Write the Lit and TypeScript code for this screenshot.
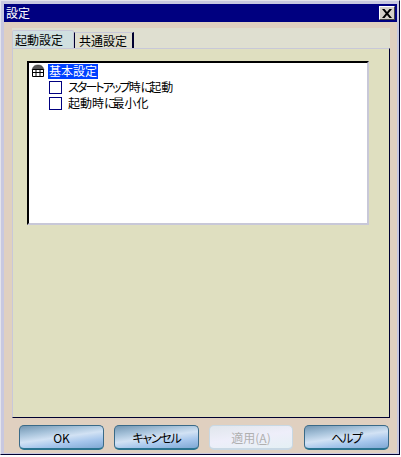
import { LitElement, html, css } from "lit";
import { customElement } from "lit/decorators.js";

@customElement("app-root")
export class AppRoot extends LitElement {
  static styles = css`
    :host { display: block; width: 401px; height: 457px; background: #fff; font-family: "Noto Sans CJK JP", "Liberation Sans", sans-serif; font-size: 12px; color: #000; font-feature-settings: "palt"; }
    * { box-sizing: border-box; }
    .win { width: 400px; height: 455px; background: #c8c8e0; border: 1px solid; border-color: #e4e4ec #000030 #000030 #e4e4ec; padding: 3px 2px 1px 3px; display: flex; flex-direction: column; }
    .title { height: 18px; background: #000080; color: #fff; display: flex; align-items: center; justify-content: space-between; padding: 0 2px 0 2px; flex: none; line-height: 18px; }
    .title span:first-child { font-feature-settings: normal; }
    .close { width: 16px; height: 14px; background: #d4d0c8; border: 1px solid; border-color: #fff #404040 #404040 #fff; display: flex; align-items: center; justify-content: center; }
    .client { flex: 1; display: flex; flex-direction: column; padding: 6px 7px 0 8px; min-height: 0; background: #e0d0c0; }
    .tabs { height: 20px; display: flex; align-items: flex-end; background: #dfdfd0; flex: none; }
    .tab { height: 16px; width: 60px; padding-left: 4px; border: 1px solid; border-width: 1px 2px 0 1px; border-color: #c8c8d8 #000030 transparent #000030; line-height: 16px; background: #dfdfd0; font-feature-settings: normal; }
    .tab.on { height: 18px; width: 62px; padding-left: 2px; background: #d0e0e0; border-width: 1px 1px 0 1px; border-color: #c8c8d8 #c8c8d8 transparent #c8c8d8; line-height: 17px; border-radius: 2px 2px 0 0; }
    .panel { height: 370px; flex: none; background: #dfdfc0; border: 1px solid; border-color: #c8c8d8 #000030 #000030 #c8c8d8; padding: 12px 0 0 14px; }
    .tree { width: 342px; height: 164px; background: #fff; border: 2px solid; border-color: #000 #c8c8d8 #c8c8d8 #000; padding: 0 0 0 2px; }
    .row { display: flex; align-items: center; height: 16px; line-height: 16px; }
    .row svg { flex: none; margin-right: 3px; }
    .sel { background: #0040ff; color: #fff; line-height: 14px; height: 15px; padding: 0 1px; font-feature-settings: normal; }
    .check { width: 13px; height: 13px; border: 1px solid #000080; background: #fff; margin: 0 6px 0 18px; flex: none; }
    .kana { letter-spacing: -1.9px; }
    .ni { letter-spacing: -3px; }
    .kana-btn { letter-spacing: -1.2px; }
    .foot { flex: 1; display: flex; align-items: flex-start; padding: 7px 0 0 7px; gap: 10px; }
    .btn { width: 85px; height: 25px; border-radius: 5px; border: 1px solid #3a6a88; border-bottom: 2px solid #2a7490; background: linear-gradient(172deg, #7396b2 0%, #a6c2da 28%, #d2e2f4 50%, #a6c6ec 72%, #7ea8d4 100%); display: flex; align-items: center; justify-content: center; color: #000; }
    .btn.off { width: 84px; margin-right: 1px; background: linear-gradient(172deg, #e0e6ec, #eeeefa 50%, #e4f0f4); border-color: #c8d8e4; color: #b0b0b0; }
  `;
  render() {
    return html`<div class="win">
      <div class="title"><span>設定</span><span class="close"><svg width="10" height="9" viewBox="0 0 10 9"><path d="M0 0h2.500L5 3l2.500-3H10L6.300 4.500 10 9H7.500L5 6 2.500 9H0L3.700 4.500z"/></svg></span></div>
      <div class="client">
        <div class="tabs"><div class="tab on">起動設定</div><div class="tab">共通設定</div></div>
        <div class="panel">
          <div class="tree">
            <div class="row"><svg width="14" height="14" viewBox="0 0 14 14"><path d="M1 6C2 2 4 1 7 1s5 1 6 5z" fill="#555" stroke="#333" stroke-width=".5"/><path d="M1.500 5.500h11v7h-11z" fill="#fff" stroke="#000"/><path d="M5 6v6M9 6v6M2 8.500h10" stroke="#000"/></svg><span class="sel">基本設定</span></div>
            <div class="row"><span class="check"></span><span><span class="kana">スタートアップ</span>時<span class="ni">に</span>起動</span></div>
            <div class="row"><span class="check"></span><span>起動時<span class="ni">に</span>最小化</span></div>
          </div>
        </div>
        <div class="foot">
          <div class="btn">OK</div><div class="btn"><span class="kana-btn">キャンセル</span></div><div class="btn off"><span>適用(<u>A</u>)</span></div><div class="btn"><span class="kana-btn">ヘルプ</span></div>
        </div>
      </div>
    </div>`;
  }
}
